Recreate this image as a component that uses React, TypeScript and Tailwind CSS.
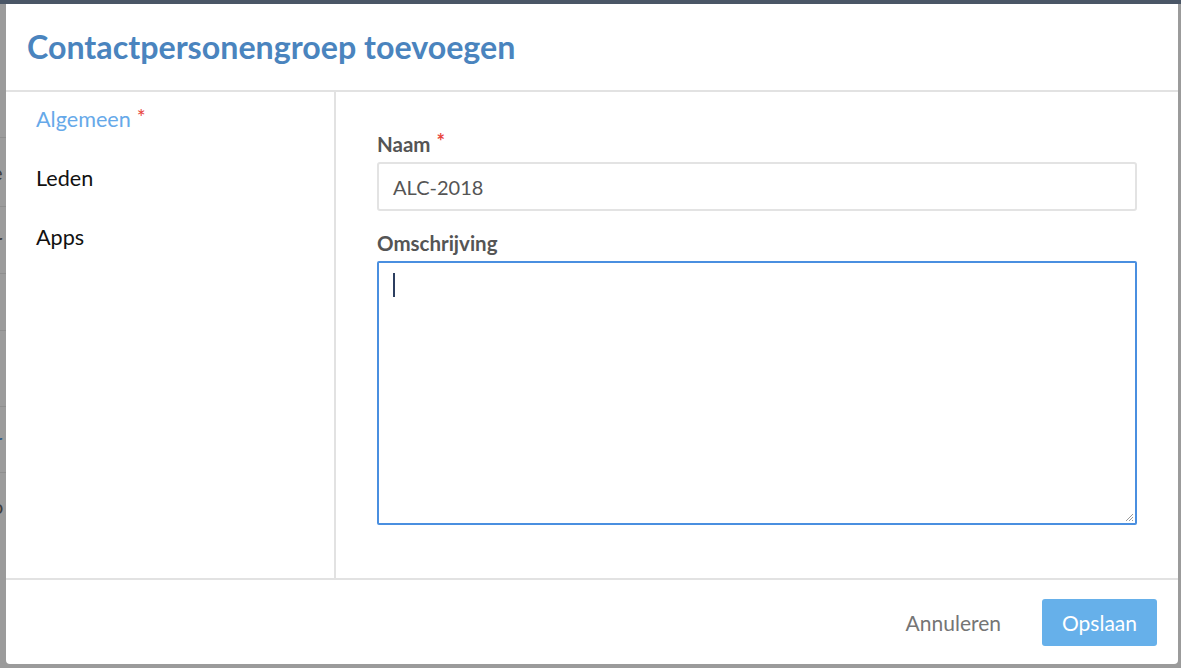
import React from 'react'

const tabs = [
  { label: 'Algemeen', active: true, required: true },
  { label: 'Leden', active: false, required: false },
  { label: 'Apps', active: false, required: false },
]

function BackdropStrip() {
  // stukje van de tabel achter de overlay
  return (
    <div className="w-[6px] shrink-0 flex flex-col text-[20px] leading-none text-[#3d3d3d] overflow-hidden">
      <div className="h-[134px] border-b border-[#8e8e8e]" />
      <div className="h-[69px] border-b border-[#8e8e8e] flex items-center -ml-[8px]">e</div>
      <div className="h-[67px] border-b border-[#8e8e8e] flex items-center -ml-[5px]">r</div>
      <div className="h-[57px] border-b border-[#8e8e8e]" />
      <div className="h-[76px] border-b border-[#8e8e8e]" />
      <div className="h-[66px] border-b border-[#8e8e8e] flex items-center -ml-[5px] text-[#2f5b86]">r</div>
      <div className="h-[66px] flex items-center -ml-[8px]">o</div>
    </div>
  )
}

export default function App() {
  return (
    <div className="w-[1181px] h-[668px] bg-[#9b9b9b] flex flex-col overflow-hidden font-['Lato',sans-serif]">
      <div className="h-[4px] shrink-0 bg-[#4a5666]" />
      <div className="flex flex-1 min-h-0">
        <BackdropStrip />

        <div className="w-[1172px] h-[660px] bg-white rounded-b-[4px] flex flex-col">
          <header className="h-[88px] shrink-0 border-b-2 border-[#e2e2e2] flex items-center pl-[21px]">
            <h1 className="text-[32.2px] font-bold text-[#4a84be]">Contactpersonengroep toevoegen</h1>
          </header>

          <div className="flex h-[488px] shrink-0 border-b-2 border-[#e2e2e2]">
            <nav className="w-[330px] shrink-0 border-r-2 border-[#e2e2e2] flex flex-col -mt-[2px]">
              {tabs.map(t => (
                <div key={t.label} className={`h-[59px] flex items-center pl-[30px] text-[21.6px] ${t.active ? 'text-[#66a9e9]' : 'text-[#111]'}`}>
                  {t.label}
                  {t.required && <span className="text-[#e8453c] text-[21px] ml-[6px] -mt-[6px] leading-none">*</span>}
                </div>
              ))}
            </nav>

            <div className="flex-1 px-[41px] pt-[39px]">
              <label className="flex items-center h-[26px] text-[20.5px] font-bold text-[#555]">
                Naam <span className="text-[#e8453c] text-[20px] ml-[6px] -mt-[6px] leading-none">*</span>
              </label>
              <div className="mt-[5px] h-[49px] border-2 border-[#e3e3e3] rounded-[3px] flex items-center px-[14px] text-[20px] text-[#555]">
                ALC-2018
              </div>

              <label className="flex items-center mt-[19px] h-[26px] text-[20.5px] font-bold text-[#555]">Omschrijving</label>
              <div className="relative mt-[5px] h-[264px] border-2 border-[#4a8fe0] rounded-[2px] px-[14px] pt-[10px]">
                <div className="w-[1.5px] h-[24px] bg-[#2c3e60]" />
                <svg className="absolute right-[1px] bottom-[1px]" width="10" height="10" viewBox="0 0 10 10">
                  <path d="M9 2L2 9M9 5L5 9M9 8L8 9" stroke="#9a9a9a" strokeWidth="1" />
                </svg>
              </div>
            </div>
          </div>

          <footer className="flex-1 flex items-center justify-end pr-[21px] pt-[1px] gap-[24px]">
            <button className="px-[17px] h-[47px] text-[21px] text-[#757575]">Annuleren</button>
            <button className="w-[115px] h-[47px] rounded-[3px] bg-[#66b0ea] text-white text-[21px]">Opslaan</button>
          </footer>
        </div>

        <div className="w-[3px] shrink-0" />
      </div>
    </div>
  )
}
